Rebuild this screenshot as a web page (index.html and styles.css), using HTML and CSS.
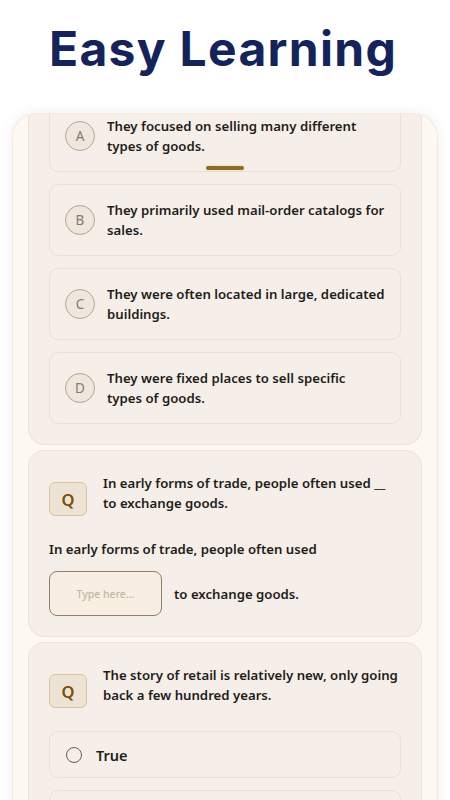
FILE: index.html
```html
<!DOCTYPE html>
<html lang="en">
<head>
<meta charset="utf-8">
<title>Easy Learning</title>
<link rel="stylesheet" href="styles.css">
</head>
<body>
<h1 class="title">Easy Learning</h1>
<div class="phone">
  <div class="handle"></div>
  <div class="scroll">
    <section class="card card-first">
      <div class="option">
        <span class="letter">A</span>
        <span class="option-text">They focused on selling many different types of goods.</span>
      </div>
      <div class="option">
        <span class="letter">B</span>
        <span class="option-text">They primarily used mail-order catalogs for sales.</span>
      </div>
      <div class="option">
        <span class="letter">C</span>
        <span class="option-text">They were often located in large, dedicated buildings.</span>
      </div>
      <div class="option">
        <span class="letter">D</span>
        <span class="option-text">They were fixed places to sell specific<br>types of goods.</span>
      </div>
    </section>

    <section class="card">
      <div class="question">
        <span class="q-badge">Q</span>
        <p class="q-text">In early forms of trade, people often used __ to exchange goods.</p>
      </div>
      <p class="sentence">In early forms of trade, people often used</p>
      <div class="fill-row">
        <div class="blank">Type here...</div>
        <span class="sentence-end">to exchange goods.</span>
      </div>
    </section>

    <section class="card">
      <div class="question">
        <span class="q-badge">Q</span>
        <p class="q-text">The story of retail is relatively new, only going back a few hundred years.</p>
      </div>
      <div class="tf-list">
        <div class="tf-option"><span class="radio"></span><span class="tf-label">True</span></div>
        <div class="tf-option"><span class="radio"></span><span class="tf-label">False</span></div>
      </div>
    </section>
  </div>
</div>
</body>
</html>
```

FILE: styles.css
```css
* { box-sizing: border-box; }

html, body {
  margin: 0;
  padding: 0;
  background: #ffffff;
  height: 800px;
  overflow: hidden;
}

body {
  font-family: "Noto Sans", "Open Sans", sans-serif;
  color: #1f1d1a;
}

.title {
  margin: 20px 0 0;
  height: 58px;
  padding-right: 4px;
  font-family: "Inter", "Noto Sans", sans-serif;
  font-weight: 700;
  font-size: 48px;
  line-height: 58px;
  text-align: center;
  color: #14245b;
  letter-spacing: 1.3px;
}

.phone {
  position: relative;
  margin: 35px 12px 0;
  height: 720px;
  background: #fdf8f2;
  border: 1px solid #f6ebdb;
  border-bottom: none;
  border-radius: 24px 24px 0 0;
  box-shadow: 0 0 14px rgba(0, 0, 0, 0.07);
  overflow: hidden;
  padding: 0 15px;
}

.handle {
  position: absolute;
  top: 52px;
  left: 50%;
  width: 38px;
  height: 4px;
  margin-left: -19px;
  border-radius: 2px;
  background: #8d6d24;
  box-shadow: 0 0 2px rgba(200, 170, 80, 0.5);
  z-index: 2;
}

.scroll {
  display: flex;
  flex-direction: column;
  gap: 5px;
}

.card {
  background: #f6eee8;
  border: 1px solid #ece2d7;
  border-radius: 16px;
  padding: 20px;
}

.card-first {
  margin-top: -35px;
  display: flex;
  flex-direction: column;
  gap: 12px;
}

.option {
  display: flex;
  align-items: center;
  gap: 12px;
  min-height: 72px;
  padding: 15px 14px 15px 15px;
  background: #f6efe9;
  border: 1px solid #ebe1d5;
  border-radius: 9px;
}

.letter {
  flex: 0 0 30px;
  width: 30px;
  height: 30px;
  border-radius: 50%;
  border: 1.5px solid #b3a590;
  background: #efe6dd;
  color: #85796c;
  font-size: 13.5px;
  font-weight: 400;
  display: flex;
  align-items: center;
  justify-content: center;
}

.option-text {
  font-size: 13.2px;
  line-height: 20px;
  font-weight: 600;
  color: #1f1d1a;
}

.question {
  display: flex;
  align-items: flex-start;
  gap: 16px;
}

.q-badge {
  flex: 0 0 38px;
  width: 38px;
  height: 34px;
  margin-top: 11px;
  border-radius: 6px;
  background: #ede3d5;
  border: 1px solid #d8c59f;
  color: #7a4e0c;
  font-size: 16.5px;
  font-weight: 600;
  display: flex;
  align-items: center;
  justify-content: center;
}

.q-text {
  margin: 2px 0 0;
  font-size: 13.2px;
  line-height: 20px;
  font-weight: 600;
  color: #1f1d1a;
}

.sentence {
  margin: 23px 0 0;
  font-size: 13.2px;
  line-height: 20px;
  font-weight: 600;
}

.fill-row {
  display: flex;
  align-items: center;
  gap: 12px;
  margin-top: 12px;
}

.blank {
  width: 113px;
  height: 45px;
  border: 1.5px solid #8e806b;
  border-radius: 8px;
  background: #f8efe2;
  color: #c1b6a4;
  font-size: 10.5px;
  font-weight: 500;
  display: flex;
  align-items: center;
  justify-content: center;
}

.sentence-end {
  font-size: 13.2px;
  font-weight: 600;
}

.tf-list {
  display: flex;
  flex-direction: column;
  gap: 12px;
  margin-top: 23px;
}

.tf-option {
  display: flex;
  align-items: center;
  gap: 14px;
  height: 47px;
  padding: 0 16px;
  background: #f6efe9;
  border: 1px solid #ebe1d5;
  border-radius: 9px;
}

.radio {
  flex: 0 0 16px;
  width: 16px;
  height: 16px;
  border-radius: 50%;
  border: 1.5px solid #6b5e4d;
}

.tf-label {
  font-size: 14.5px;
  font-weight: 600;
  color: #1f1d1a;
}
```
